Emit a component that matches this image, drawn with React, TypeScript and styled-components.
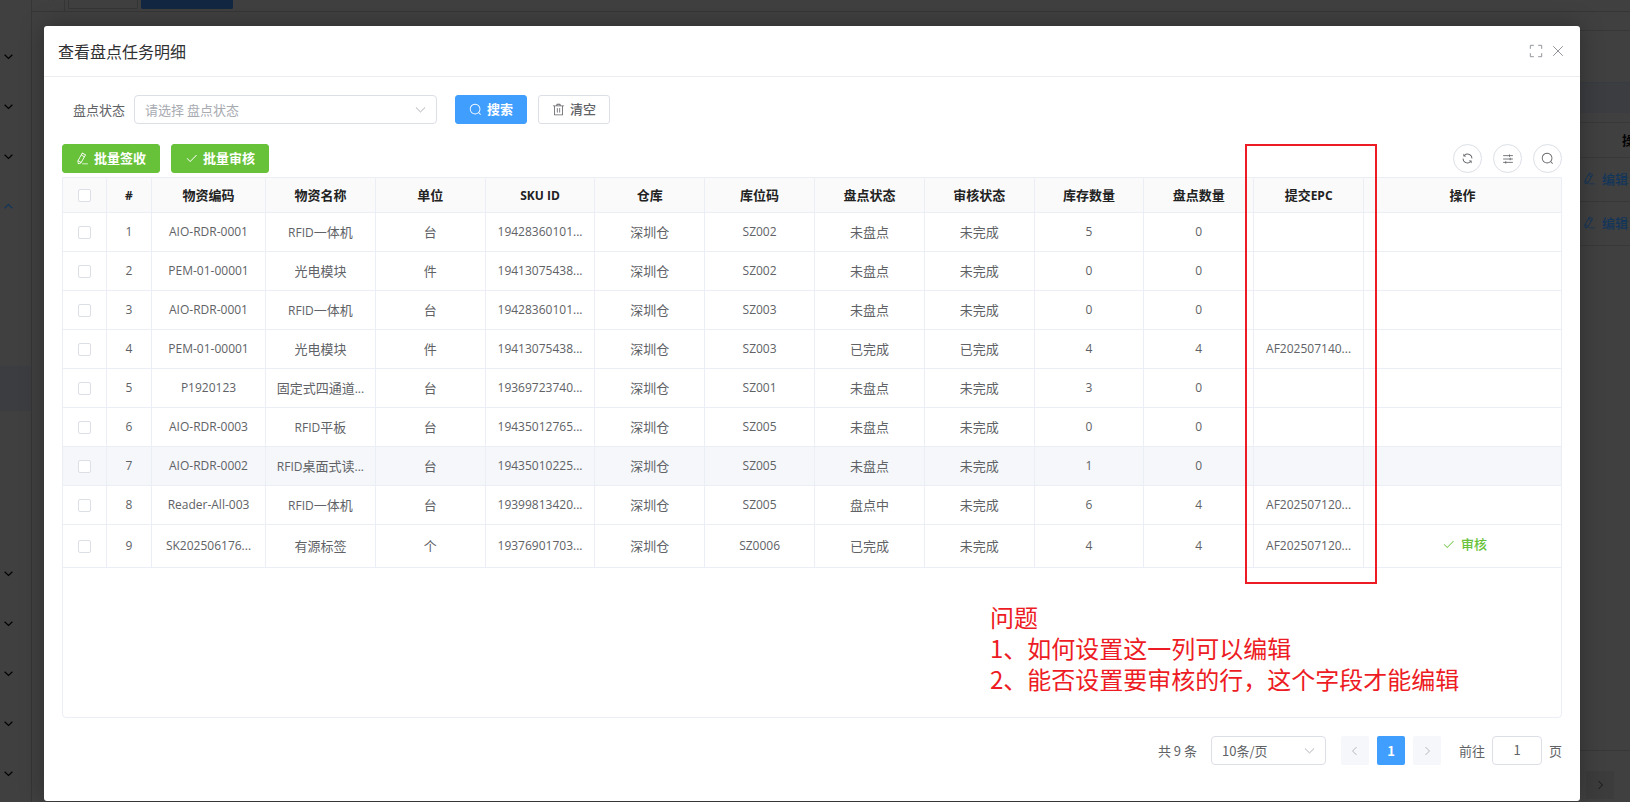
import React from 'react';
import styled, { createGlobalStyle, css } from 'styled-components';

const Global = createGlobalStyle`
  * { box-sizing: border-box; }
  html, body, #root { margin: 0; min-height: 100vh; }
  body {
    font-family: 'Noto Sans CJK SC', sans-serif;
    font-size: 13px;
    color: #606266;
    background: #404040;
    overflow: hidden;
  }
  button, input, select { font: inherit; color: inherit; }
  button { cursor: pointer; }
`;

/* ---------- icons ---------- */

const Svg = styled.svg<{ $size?: number; $solid?: boolean }>`
  width: ${p => p.$size ?? 14}px;
  height: ${p => p.$size ?? 14}px;
  flex: none;
  fill: ${p => (p.$solid ? 'currentColor' : 'none')};
  stroke: ${p => (p.$solid ? 'none' : 'currentColor')};
  stroke-width: 72;
  display: block;
`;

const outlines = {
  down: 'M152 352l360 350 360-350',
  up: 'M152 672l360-350 360 350',
  left: 'M640 176L304 512l336 336',
  right: 'M384 176l336 336-336 336',
  close: 'M160 160L864 864M864 160L160 864',
  full: 'M96 352V96H352M672 96H928V352M928 672V928H672M352 928H96V672',
  sliders: 'M96 224H928M640 120V328M96 512H928M700 408V616M96 800H928M320 696V904',
  collapse: 'M480 200L200 480L480 760M840 200L560 480L840 760',
};

const solids = {
  search: 'm795.904 750.72 124.992 124.928a32 32 0 0 1-45.248 45.248L750.656 795.904a416 416 0 1 1 45.248-45.248zM480 832a352 352 0 1 0 0-704 352 352 0 0 0 0 704z',
  trash: 'M160 256H96a32 32 0 0 1 0-64h256V95.936a32 32 0 0 1 32-32h256a32 32 0 0 1 32 32V192h256a32 32 0 1 1 0 64h-64v672a32 32 0 0 1-32 32H192a32 32 0 0 1-32-32V256zm448-64v-64H416v64h192zM224 896h576V256H224v640zm192-128a32 32 0 0 1-32-32V416a32 32 0 0 1 64 0v320a32 32 0 0 1-32 32zm192 0a32 32 0 0 1-32-32V416a32 32 0 0 1 64 0v320a32 32 0 0 1-32 32z',
  edit: 'm199.04 672.64 193.984 112 224-387.968-193.92-112-224 388.032zm-23.872 60.16 32.896 148.288 144.896-45.696L175.168 732.8zM455.04 229.248l193.92 112 56.704-98.112-193.984-112-56.64 98.112zM104.32 708.8l384-665.024 304.768 175.936L409.152 884.8h.064l-248.448 78.336L104.32 708.8zm384 254.272v-64h448v64h-448z',
  check: 'M406.656 706.944 195.84 496.256a32 32 0 1 0-45.248 45.248l256 256 512-512a32 32 0 0 0-45.248-45.248L406.592 706.944z',
  refresh: 'M771.776 794.88A384 384 0 0 1 128 512h64a320 320 0 0 0 555.712 216.448H654.72a32 32 0 1 1 0-64h149.056a32 32 0 0 1 32 32v148.928a32 32 0 1 1-64 0v-50.56zM276.288 295.616h92.992a32 32 0 0 1 0 64H220.16a32 32 0 0 1-32-32V178.56a32 32 0 0 1 64 0v50.56A384 384 0 0 1 896.128 512h-64a320 320 0 0 0-555.776-216.384z',
};

type IconName = keyof typeof outlines | keyof typeof solids;

const Icon = ({ name, size }: { name: IconName; size?: number }) => {
  const solid = name in solids;
  return (
    <Svg viewBox="0 0 1024 1024" $size={size} $solid={solid} aria-hidden="true">
      <path d={{ ...outlines, ...solids }[name]} />
    </Svg>
  );
};

/* ---------- dimmed page behind the dialog ---------- */

const Backdrop = styled.div`
  position: absolute;
  inset: 0;
  display: flex;
  overflow: hidden;
  color: #101010;
`;

const Sidebar = styled.nav`
  width: 32px;
  flex: none;
  padding-top: 31px;
  border-right: 1px solid #363636;
`;

const MenuItem = styled.div<{ $open?: boolean }>`
  height: 50px;
  padding-left: 3px;
  display: flex;
  align-items: center;
  color: ${p => (p.$open ? '#12355a' : '#000')};
  svg { stroke-width: 110; }
`;

const SubMenu = styled.div`
  padding-bottom: 2px;
`;

const SubItem = styled.div<{ $active?: boolean }>`
  height: 45px;
  background: ${p => (p.$active ? '#3b3d40' : 'transparent')};
`;

const Main = styled.div`
  flex: 1;
  min-width: 0;
  display: flex;
  flex-direction: column;
`;

const Tabs = styled.div`
  height: 12px;
  flex: none;
  display: flex;
  align-items: flex-start;
  gap: 3px;
  border-bottom: 1px solid #363636;
`;

const TabArrow = styled.div`
  width: 33px;
  height: 11px;
  padding-left: 12px;
  border-right: 1px solid #363636;
  overflow: hidden;
  svg { margin-top: -8px; }
`;

const Tab = styled.div<{ $active?: boolean }>`
  width: ${p => (p.$active ? 92 : 70)}px;
  height: 9px;
  border: 1px solid #363636;
  border-top: 0;
  border-radius: 0 0 2px 2px;
  ${p => p.$active && css`
    border-color: #122842;
    background: #122842;
  `}
`;

const BackTable = styled.div`
  margin: 18px 0 0 14px;
  padding-top: 51px;
  flex: 1;
  display: flex;
  flex-direction: column;
  border-top: 1px solid #383838;
`;

const Notice = styled.div`
  height: 31px;
  background: #3b3d40;
  border-top: 1px solid #363c42;
`;

const BackRow = styled.div<{ $h: number; $head?: boolean }>`
  height: ${p => p.$h}px;
  display: flex;
  align-items: center;
  justify-content: flex-end;
  gap: 6px;
  padding-right: ${p => (p.$head ? 0 : 2)}px;
  padding-bottom: 2px;
  border-bottom: 1px solid #383838;
  overflow: hidden;
  white-space: nowrap;
  color: ${p => (p.$head ? '#050505' : '#12355a')};
  font-weight: ${p => (p.$head ? 700 : 500)};
`;

const Clip = styled.span`
  width: 8px;
  overflow: hidden;
`;

const BackFooter = styled.div`
  margin-top: auto;
  height: 52px;
  padding: 20px 16px 0 0;
  border-top: 1px solid #383838;
  display: flex;
  justify-content: flex-end;
`;

const BackPager = styled.div`
  width: 28px;
  height: 28px;
  display: grid;
  place-items: center;
  background: #3c3c3d;
`;

/* ---------- dialog ---------- */

const Page = styled.div`
  position: relative;
  min-height: 100vh;
  display: flex;
  padding: 26px 50px 1px 44px;
`;

const Dialog = styled.section`
  position: relative;
  flex: 1;
  min-width: 0;
  display: flex;
  flex-direction: column;
  background: #fff;
  border-radius: 3px;
  box-shadow: 0 0 24px rgba(0, 0, 0, 0.3);
`;

const Header = styled.header`
  height: 51px;
  flex: none;
  display: flex;
  align-items: center;
  justify-content: space-between;
  padding: 0 15px 0 14px;
  border-bottom: 1px solid #ebedf0;
`;

const Title = styled.h1`
  margin: 0;
  font-size: 16px;
  line-height: 24px;
  font-weight: 400;
  color: #303133;
`;

const HeaderTools = styled.div`
  display: flex;
  gap: 8px;
  color: #909399;
`;

const PlainButton = styled.button`
  padding: 0;
  border: 0;
  background: none;
`;

const Body = styled.div`
  flex: 1;
  display: flex;
  flex-direction: column;
  padding: 18px 18px 36px;
`;

const SearchForm = styled.form`
  display: flex;
  align-items: center;
  padding-left: 11px;
  margin-bottom: 20px;
`;

const SelectBox = styled.div<{ $width: number }>`
  position: relative;
  width: ${p => p.$width}px;
  svg {
    position: absolute;
    right: 10px;
    top: 8px;
    color: #a8abb2;
    pointer-events: none;
  }
`;

const Select = styled.select<{ $placeholder?: boolean }>`
  appearance: none;
  display: block;
  width: 100%;
  height: 29px;
  padding: 0 28px 0 10px;
  border: 1px solid #dcdfe6;
  border-radius: 4px;
  background: #fff;
  color: ${p => (p.$placeholder ? '#a8abb2' : '#606266')};
`;

const FormLabel = styled.label`
  margin-right: 9px;
`;

const Button = styled.button<{ $kind?: 'primary' | 'success' }>`
  height: 29px;
  padding: 0 13px 2px;
  display: flex;
  align-items: center;
  gap: 5px;
  border: 1px solid #dcdfe6;
  border-radius: 3px;
  background: #fff;
  font-weight: 500;
  line-height: 20px;
  white-space: nowrap;
  svg { margin-top: 2px; }
  ${p => p.$kind && css`
    color: #fff;
    font-weight: 700;
    background: ${p.$kind === 'primary' ? '#409eff' : '#67c23a'};
    border-color: ${p.$kind === 'primary' ? '#409eff' : '#67c23a'};
  `}
`;

const FormActions = styled.div`
  display: flex;
  gap: 11px;
  margin-left: 18px;
`;

const Toolbar = styled.div`
  display: flex;
  justify-content: space-between;
  margin-bottom: 4px;
`;

const Group = styled.div`
  display: flex;
  gap: 11px;
`;

const RoundButton = styled.button`
  width: 29px;
  height: 29px;
  padding: 0;
  display: grid;
  place-items: center;
  border: 1px solid #dcdfe6;
  border-radius: 50%;
  background: #fff;
`;

const TablePanel = styled.div`
  flex: 1;
  min-height: 541px;
  border: 1px solid #ebeef5;
  border-radius: 0 0 4px 4px;
`;

const Table = styled.table`
  width: 100%;
  table-layout: fixed;
  border-collapse: separate;
  border-spacing: 0;
`;

const Col = styled.col<{ $width?: number }>`
  width: ${p => (p.$width ? `${p.$width}px` : 'auto')};
`;

const cell = css`
  padding: 0 10px;
  border-right: 1px solid #ebeef5;
  border-bottom: 1px solid #ebeef5;
  text-align: center;
  line-height: 20px;
  white-space: nowrap;
  overflow: hidden;
  text-overflow: ellipsis;
  &:last-child { border-right: 0; }
`;

const Th = styled.th`
  ${cell}
  height: 35px;
  background: #fafafa;
  color: #222;
  font-weight: 700;
`;

const Td = styled.td<{ $latin?: boolean }>`
  ${cell}
  ${p => p.$latin && css`
    font-family: 'Open Sans', 'Noto Sans CJK SC', sans-serif;
    font-size: 12px;
  `}
`;

const Tr = styled.tr<{ $hover?: boolean; $tall?: boolean }>`
  height: ${p => (p.$tall ? 43 : 39)}px;
  background: ${p => (p.$hover ? '#f5f7fa' : '#fff')};
`;

const Latin = styled.span`
  font-family: 'Open Sans', sans-serif;
  font-size: 12px;
`;

const Check = styled.input`
  appearance: none;
  display: block;
  width: 13px;
  height: 13px;
  margin: 0 auto;
  border: 1px solid #dcdfe6;
  border-radius: 2px;
  background: #fff;
`;

const LinkButton = styled.button`
  display: inline-flex;
  align-items: center;
  gap: 6px;
  padding: 0 0 4px 4px;
  border: 0;
  background: none;
  color: #67c23a;
  font-weight: 500;
  vertical-align: middle;
`;

const Pagination = styled.footer`
  display: flex;
  align-items: center;
  justify-content: flex-end;
  margin-top: 18px;
`;

const Pager = styled.div`
  display: flex;
  gap: 8px;
  margin: 0 18px 0 15px;
`;

const PageButton = styled.button<{ $active?: boolean }>`
  width: 28px;
  height: 29px;
  padding: 0;
  display: grid;
  place-items: center;
  border: 0;
  border-radius: 2px;
  font-weight: 700;
  color: ${p => (p.$active ? '#fff' : '#a8abb2')};
  background: ${p => (p.$active ? '#409eff' : '#f5f7fa')};
`;

const Total = styled.span`
  margin-right: 14px;
`;

const Jump = styled.label`
  display: flex;
  align-items: center;
  gap: 7px;
`;

const JumpInput = styled.input`
  width: 50px;
  height: 29px;
  padding: 0 0 2px;
  border: 1px solid #dcdfe6;
  border-radius: 4px;
  text-align: center;
`;

/* ---------- review marks drawn over the dialog ---------- */

const ColumnMark = styled.div`
  position: absolute;
  top: 118px;
  right: 203px;
  width: 132px;
  height: 440px;
  border: 2px solid #ed1c24;
  pointer-events: none;
`;

const Note = styled.p`
  position: absolute;
  top: 575px;
  right: 118px;
  width: 472px;
  margin: 0;
  color: #ed1c24;
  font-size: 24px;
  line-height: 31px;
  white-space: nowrap;
`;

/* ---------- data ---------- */

const headers = ['物资编码', '物资名称', '单位', 'SKU ID', '仓库', '库位码', '盘点状态', '审核状态', '库存数量', '盘点数量', '提交EPC', '操作'];

const rows = [
  ['AIO-RDR-0001', 'RFID一体机', '台', '19428360101...', '深圳仓', 'SZ002', '未盘点', '未完成', '5', '0', ''],
  ['PEM-01-00001', '光电模块', '件', '19413075438...', '深圳仓', 'SZ002', '未盘点', '未完成', '0', '0', ''],
  ['AIO-RDR-0001', 'RFID一体机', '台', '19428360101...', '深圳仓', 'SZ003', '未盘点', '未完成', '0', '0', ''],
  ['PEM-01-00001', '光电模块', '件', '19413075438...', '深圳仓', 'SZ003', '已完成', '已完成', '4', '4', 'AF202507140...'],
  ['P1920123', '固定式四通道...', '台', '19369723740...', '深圳仓', 'SZ001', '未盘点', '未完成', '3', '0', ''],
  ['AIO-RDR-0003', 'RFID平板', '台', '19435012765...', '深圳仓', 'SZ005', '未盘点', '未完成', '0', '0', ''],
  ['AIO-RDR-0002', 'RFID桌面式读...', '台', '19435010225...', '深圳仓', 'SZ005', '未盘点', '未完成', '1', '0', ''],
  ['Reader-All-003', 'RFID一体机', '台', '19399813420...', '深圳仓', 'SZ005', '盘点中', '未完成', '6', '4', 'AF202507120...'],
  ['SK202506176...', '有源标签', '个', '19376901703...', '深圳仓', 'SZ0006', '已完成', '未完成', '4', '4', 'AF202507120...'],
];

/* Sets the Latin runs of a mixed text in the Latin face. */
const Mixed = ({ text }: { text: string }) => (
  <>
    {text.split(/([\x20-\x7e]+)/).filter(Boolean).map((run, i) =>
      /^[\x20-\x7e]/.test(run) ? <Latin key={i}>{run}</Latin> : run,
    )}
  </>
);

const DataCell = ({ text }: { text: string }) =>
  /^[\x20-\x7e]*$/.test(text) ? <Td $latin>{text}</Td> : <Td><Mixed text={text} /></Td>;

const Behind = () => (
  <Backdrop aria-hidden="true">
    <Sidebar>
      {[0, 1, 2].map(i => <MenuItem key={i}><Icon name="down" size={11} /></MenuItem>)}
      <MenuItem $open><Icon name="up" size={11} /></MenuItem>
      <SubMenu>
        {[0, 1, 2, 3, 4, 5, 6].map(i => <SubItem key={i} $active={i === 3} />)}
      </SubMenu>
      {[0, 1, 2, 3, 4].map(i => <MenuItem key={i}><Icon name="down" size={11} /></MenuItem>)}
    </Sidebar>
    <Main>
      <Tabs>
        <TabArrow><Icon name="collapse" size={11} /></TabArrow>
        <Tab />
        <Tab $active />
      </Tabs>
      <BackTable>
        <Notice />
        <BackRow $h={10} />
        <BackRow $h={35} $head><Clip>操作</Clip></BackRow>
        <BackRow $h={44}><Icon name="edit" size={13} />编辑</BackRow>
        <BackRow $h={44}><Icon name="edit" size={13} />编辑</BackRow>
        <BackFooter><BackPager><Icon name="right" size={12} /></BackPager></BackFooter>
      </BackTable>
    </Main>
  </Backdrop>
);

export default function App() {
  return (
    <>
      <Global />
      <Page>
        <Behind />
        <Dialog role="dialog" aria-labelledby="dialog-title">
          <Header>
            <Title id="dialog-title">查看盘点任务明细</Title>
            <HeaderTools>
              <PlainButton aria-label="全屏"><Icon name="full" /></PlainButton>
              <PlainButton aria-label="关闭"><Icon name="close" /></PlainButton>
            </HeaderTools>
          </Header>
          <Body>
            <SearchForm onSubmit={e => e.preventDefault()}>
              <FormLabel htmlFor="status">盘点状态</FormLabel>
              <SelectBox $width={303}>
                <Select id="status" $placeholder defaultValue="">
                  <option value="">请选择 盘点状态</option>
                </Select>
                <Icon name="down" size={13} />
              </SelectBox>
              <FormActions>
                <Button $kind="primary" type="submit"><Icon name="search" size={13} />搜索</Button>
                <Button type="reset"><Icon name="trash" size={13} />清空</Button>
              </FormActions>
            </SearchForm>
            <Toolbar>
              <Group>
                <Button $kind="success"><Icon name="edit" size={13} />批量签收</Button>
                <Button $kind="success"><Icon name="check" size={13} />批量审核</Button>
              </Group>
              <Group>
                <RoundButton aria-label="刷新"><Icon name="refresh" size={13} /></RoundButton>
                <RoundButton aria-label="列设置"><Icon name="sliders" size={12} /></RoundButton>
                <RoundButton aria-label="搜索"><Icon name="search" size={13} /></RoundButton>
              </Group>
            </Toolbar>
            <TablePanel>
              <Table>
                <colgroup>
                  <Col $width={44} />
                  <Col $width={45} />
                  <Col $width={114} />
                  {Array.from({ length: 10 }, (_, i) => <Col key={i} />)}
                  <Col $width={197} />
                </colgroup>
                <thead>
                  <tr>
                    <Th><Check type="checkbox" aria-label="全选" /></Th>
                    <Th><Latin>#</Latin></Th>
                    {headers.map(h => <Th key={h}><Mixed text={h} /></Th>)}
                  </tr>
                </thead>
                <tbody>
                  {rows.map((row, i) => (
                    <Tr key={i} $hover={i === 6} $tall={i === 8}>
                      <Td><Check type="checkbox" aria-label={`选择第 ${i + 1} 行`} /></Td>
                      <Td $latin>{i + 1}</Td>
                      {row.map((text, j) => <DataCell key={j} text={text} />)}
                      <Td>{i === 8 && <LinkButton><Icon name="check" size={13} />审核</LinkButton>}</Td>
                    </Tr>
                  ))}
                </tbody>
              </Table>
            </TablePanel>
            <Pagination>
              <Total>共 9 条</Total>
              <SelectBox $width={115}>
                <Select aria-label="每页条数"><option>10条/页</option></Select>
                <Icon name="down" size={13} />
              </SelectBox>
              <Pager>
                <PageButton aria-label="上一页"><Icon name="left" size={12} /></PageButton>
                <PageButton $active>1</PageButton>
                <PageButton aria-label="下一页"><Icon name="right" size={12} /></PageButton>
              </Pager>
              <Jump>前往<JumpInput defaultValue="1" />页</Jump>
            </Pagination>
          </Body>
          <ColumnMark />
          <Note>
            问题<br />
            1、如何设置这一列可以编辑<br />
            2、能否设置要审核的行，这个字段才能编辑
          </Note>
        </Dialog>
      </Page>
    </>
  );
}
